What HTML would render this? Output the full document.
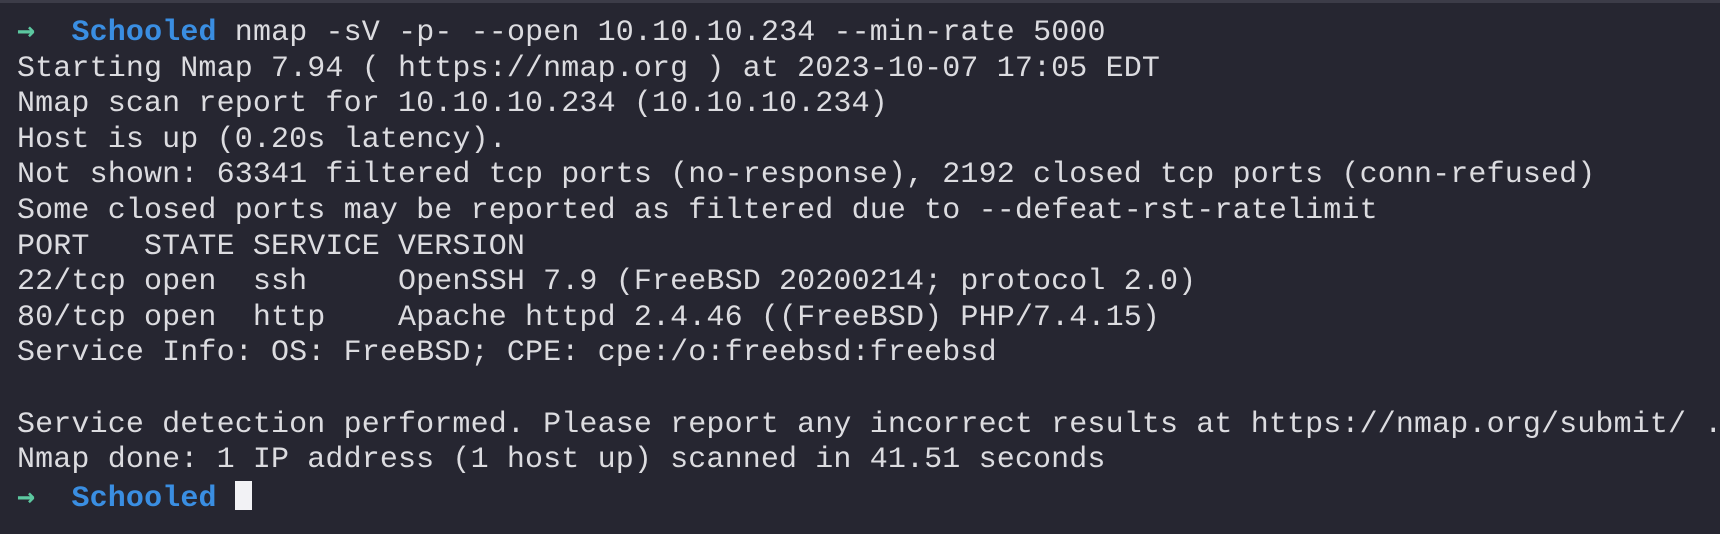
<!DOCTYPE html>
<html><head><style>
html,body{margin:0;padding:0;}
body{width:1720px;height:534px;background:#262631;overflow:hidden;position:relative;}
.top{position:absolute;left:0;top:0;width:1720px;height:3px;background:#3c3c48;}
pre{position:absolute;left:17px;top:13px;margin:0;font-family:"Liberation Mono",monospace;font-size:30px;line-height:35.6px;color:#dcdce0;letter-spacing:0.14px;}
.g{color:#5cc8a0;font-weight:bold;font-family:"DejaVu Sans Mono",monospace;}
.b{color:#3a8ee2;font-weight:bold;}
.cur{display:inline-block;width:17px;height:29px;background:#f2f2f5;vertical-align:-4px;}
</style></head><body>
<div class="top"></div>
<pre><span class="g">→</span>  <span class="b">Schooled</span> nmap -sV -p- --open 10.10.10.234 --min-rate 5000
Starting Nmap 7.94 ( https://nmap.org ) at 2023-10-07 17:05 EDT
Nmap scan report for 10.10.10.234 (10.10.10.234)
Host is up (0.20s latency).
Not shown: 63341 filtered tcp ports (no-response), 2192 closed tcp ports (conn-refused)
Some closed ports may be reported as filtered due to --defeat-rst-ratelimit
PORT   STATE SERVICE VERSION
22/tcp open  ssh     OpenSSH 7.9 (FreeBSD 20200214; protocol 2.0)
80/tcp open  http    Apache httpd 2.4.46 ((FreeBSD) PHP/7.4.15)
Service Info: OS: FreeBSD; CPE: cpe:/o:freebsd:freebsd

Service detection performed. Please report any incorrect results at https://nmap.org/submit/ .
Nmap done: 1 IP address (1 host up) scanned in 41.51 seconds
<span class="g">→</span>  <span class="b">Schooled</span> <span class="cur"></span></pre>
</body></html>
